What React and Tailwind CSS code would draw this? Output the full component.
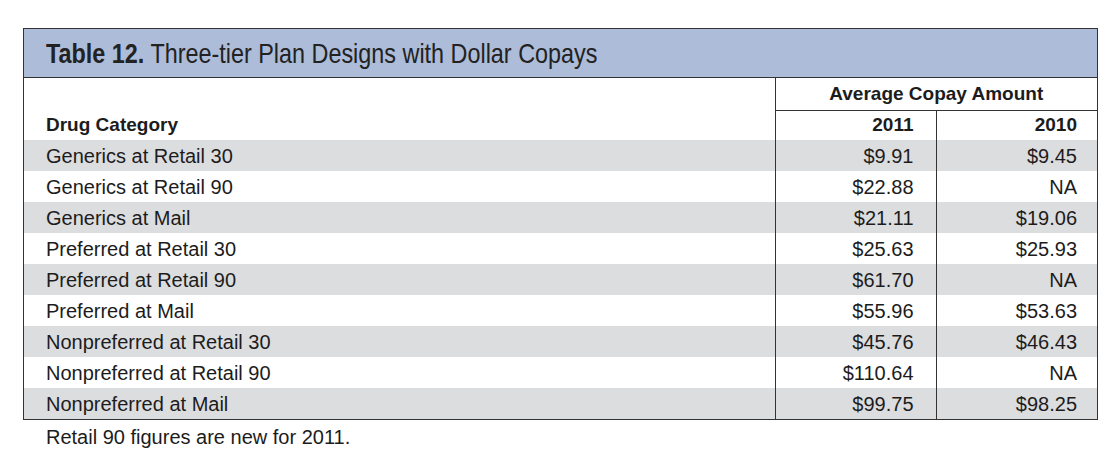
import React from 'react';

const rows = [
  ['Generics at Retail 30', '$9.91', '$9.45'],
  ['Generics at Retail 90', '$22.88', 'NA'],
  ['Generics at Mail', '$21.11', '$19.06'],
  ['Preferred at Retail 30', '$25.63', '$25.93'],
  ['Preferred at Retail 90', '$61.70', 'NA'],
  ['Preferred at Mail', '$55.96', '$53.63'],
  ['Nonpreferred at Retail 30', '$45.76', '$46.43'],
  ['Nonpreferred at Retail 90', '$110.64', 'NA'],
  ['Nonpreferred at Mail', '$99.75', '$98.25'],
];

export default function App() {
  return (
    <div className="w-[1119px] h-[462px] bg-white pt-[28px] pl-[23px] text-[#1c1c1c] font-['Liberation_Sans',Arial,sans-serif]">
      <div className="w-[1075px] border border-[#333]">
        {/* title band */}
        <div className="h-[49px] bg-[#adbcd9] border-b border-[#333] pl-[22px] flex items-center">
          <h2 className="inline-block origin-left scale-x-[0.835] whitespace-nowrap text-[28px] leading-none text-[#222] translate-y-[1px]">
            <span className="font-bold">Table 12.</span> Three-tier Plan Designs with Dollar Copays
          </h2>
        </div>

        <table className="w-full border-collapse text-[20px] table-fixed">
          <colgroup>
            <col className="w-[751px]" />
            <col className="w-[161px]" />
            <col />
          </colgroup>
          <thead className="text-[19px]">
            <tr className="h-[32px]">
              <th className="border-r border-[#333]" />
              <th
                colSpan={2}
                className="border-b border-[#333] text-center font-bold align-middle"
              >
                Average Copay Amount
              </th>
            </tr>
            <tr className="h-[30px]">
              <th className="text-left font-bold pl-[22px] border-r border-[#333]">Drug Category</th>
              <th className="text-right font-bold pr-[22px] border-r border-[#333]">2011</th>
              <th className="text-right font-bold pr-[20px]">2010</th>
            </tr>
          </thead>
          <tbody>
            {rows.map(([label, a, b], i) => (
              <tr key={label} className={`h-[31px] ${i % 2 === 0 ? 'bg-[#dcdddf]' : 'bg-white'}`}>
                <td className="pl-[22px] border-r border-[#333]">{label}</td>
                <td className="text-right pr-[22px] border-r border-[#333]">{a}</td>
                <td className="text-right pr-[20px]">{b}</td>
              </tr>
            ))}
          </tbody>
        </table>
      </div>
      <p className="pl-[23px] mt-[2px] text-[20px] leading-[30px]">Retail 90 figures are new for 2011.</p>
    </div>
  );
}
